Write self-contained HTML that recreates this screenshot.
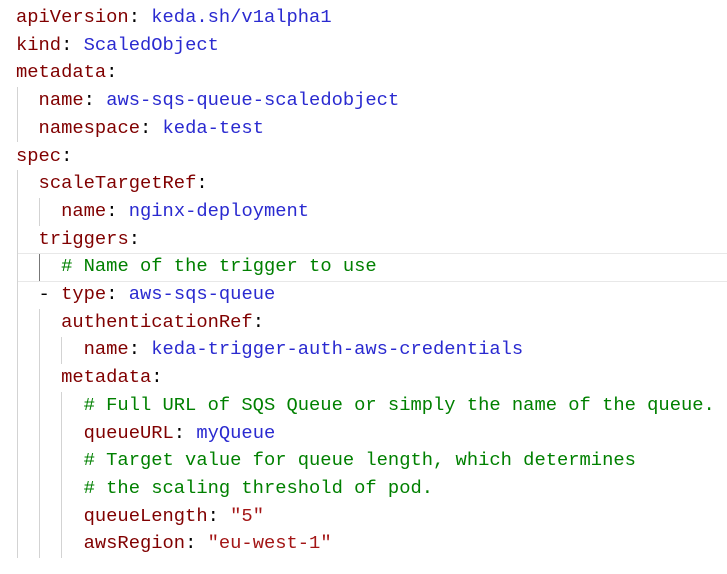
<!DOCTYPE html>
<html><head><meta charset="utf-8"><style>
html,body{margin:0;padding:0;background:#fff;width:727px;height:574px;overflow:hidden}
.l{position:absolute;left:16px;height:27.7px;line-height:27.7px;font-family:"Liberation Mono",monospace;font-size:18.8px;white-space:pre;color:#000}
.k{color:#800000}.v{color:#0000ff;color:#2a2ad0}.c{color:#008000}.s{color:#a31515}
.g{position:absolute;width:1px;background:#d3d3d3}
.cur{position:absolute;left:17px;right:0;top:253px;height:27px;border-top:1px solid #e8e8e8;border-bottom:1px solid #e8e8e8}
</style></head><body>
<div class="cur"></div>
<div class="g" style="left:17px;top:87px;height:55px"></div>
<div class="g" style="left:17px;top:170px;height:388px"></div>
<div class="g" style="left:39px;top:198px;height:28px"></div>
<div class="g" style="left:39px;top:254px;height:27px;background:#777"></div>
<div class="g" style="left:39px;top:309px;height:249px"></div>
<div class="g" style="left:61px;top:337px;height:27px"></div>
<div class="g" style="left:61px;top:392px;height:166px"></div>
<div class="l" style="top:4px"><span class="k">apiVersion</span>: <span class="v">keda.sh/v1alpha1</span></div>
<div class="l" style="top:31.7px"><span class="k">kind</span>: <span class="v">ScaledObject</span></div>
<div class="l" style="top:59.4px"><span class="k">metadata</span>:</div>
<div class="l" style="top:87.1px">  <span class="k">name</span>: <span class="v">aws-sqs-queue-scaledobject</span></div>
<div class="l" style="top:114.8px">  <span class="k">namespace</span>: <span class="v">keda-test</span></div>
<div class="l" style="top:142.5px"><span class="k">spec</span>:</div>
<div class="l" style="top:170.2px">  <span class="k">scaleTargetRef</span>:</div>
<div class="l" style="top:197.9px">    <span class="k">name</span>: <span class="v">nginx-deployment</span></div>
<div class="l" style="top:225.6px">  <span class="k">triggers</span>:</div>
<div class="l" style="top:253.3px">    <span class="c"># Name of the trigger to use</span></div>
<div class="l" style="top:281px">  - <span class="k">type</span>: <span class="v">aws-sqs-queue</span></div>
<div class="l" style="top:308.7px">    <span class="k">authenticationRef</span>:</div>
<div class="l" style="top:336.4px">      <span class="k">name</span>: <span class="v">keda-trigger-auth-aws-credentials</span></div>
<div class="l" style="top:364.1px">    <span class="k">metadata</span>:</div>
<div class="l" style="top:391.8px">      <span class="c"># Full URL of SQS Queue or simply the name of the queue.</span></div>
<div class="l" style="top:419.5px">      <span class="k">queueURL</span>: <span class="v">myQueue</span></div>
<div class="l" style="top:447.2px">      <span class="c"># Target value for queue length, which determines</span></div>
<div class="l" style="top:474.9px">      <span class="c"># the scaling threshold of pod.</span></div>
<div class="l" style="top:502.6px">      <span class="k">queueLength</span>: <span class="s">"5"</span></div>
<div class="l" style="top:530.3px">      <span class="k">awsRegion</span>: <span class="s">"eu-west-1"</span></div>
</body></html>
